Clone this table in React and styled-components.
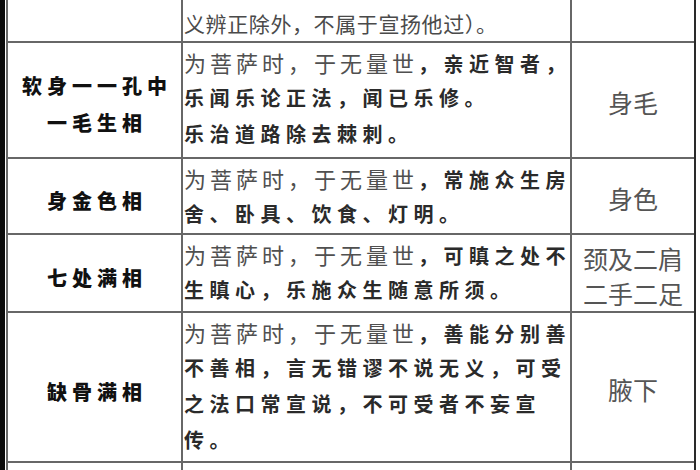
import React from 'react';
import styled, { createGlobalStyle } from 'styled-components';

const GlobalStyle = createGlobalStyle`
  html, body {
    margin: 0;
    padding: 0;
    background: #fff;
    overflow: hidden;
  }
  body {
    font-family: "Noto Sans CJK SC", "Noto Sans", sans-serif;
  }
`;

const rows = [
  {
    title: [],
    lines: [[null, '义辨正除外，不属于宣扬他过）。']],
    part: [],
    height: 43,
    top: 5,
    plain: true,
  },
  {
    title: ['软身一一孔中', '一毛生相'],
    lines: [
      ['为菩萨时，于无量世', '，亲近智者，'],
      [null, null, '乐闻乐论正法，闻已乐修。'],
      [null, null, '乐治道路除去棘刺。'],
    ],
    part: ['身毛'],
    height: 116,
  },
  {
    title: ['身金色相'],
    lines: [
      ['为菩萨时，于无量世', '，常施众生房'],
      [null, null, '舍、卧具、饮食、灯明。'],
    ],
    part: ['身色'],
    height: 76,
  },
  {
    title: ['七处满相'],
    lines: [
      ['为菩萨时，于无量世', '，可瞋之处不'],
      [null, null, '生瞋心，乐施众生随意所须。'],
    ],
    part: ['颈及二肩', '二手二足'],
    height: 78,
  },
  {
    title: ['缺骨满相'],
    lines: [
      ['为菩萨时，于无量世', '，善能分别善'],
      [null, null, '不善相，言无错谬不说无义，可受'],
      [null, null, '之法口常宣说，不可受者不妄宣'],
      [null, null, '传。'],
    ],
    part: ['腋下'],
    height: 150,
  },
  {
    title: [],
    lines: [],
    part: [],
    height: 40,
  },
];

const Frame = styled.div`
  display: flex;
  height: 470px;
  overflow: hidden;
  border-left: 5px solid #0b0b0b;
  padding-left: 1px;
  box-sizing: border-box;
`;

const Table = styled.div`
  display: flex;
  flex-direction: column;
  width: 690px;
  border-left: 2px solid #6a6a6a;
  border-right: 2px solid #2a2a2a;
  box-sizing: border-box;
  align-self: flex-start;
`;

const Row = styled.div`
  display: grid;
  grid-template-columns: 175px 389px 122px;
  height: ${(p) => p.$h}px;
  border-bottom: 2px solid #676767;
  box-sizing: border-box;
  flex-shrink: 0;
`;

const Cell = styled.div`
  border-right: 2px solid #676767;
  box-sizing: border-box;
  overflow: hidden;
  &:last-child {
    border-right: none;
  }
`;

const TitleCell = styled(Cell)`
  display: flex;
  flex-direction: column;
  justify-content: center;
  align-items: center;
  padding-top: 8px;
`;

const TitleLine = styled.div`
  font-size: 20px;
  font-weight: 900;
  color: #111;
  letter-spacing: 5px;
  padding-left: 5px;
  line-height: 37px;
  white-space: nowrap;
`;

const TextCell = styled(Cell)`
  padding-top: ${(p) => p.$top ?? 1}px;
  padding-left: 1px;
`;

const TextLine = styled.div`
  line-height: 36px;
  height: 36px;
  white-space: nowrap;
`;

const Lead = styled.span`
  font-size: 22px;
  font-weight: 400;
  color: #505050;
  letter-spacing: 4px;
`;

const Plain = styled.span`
  font-size: 21px;
  font-weight: 400;
  color: #4a4a4a;
  letter-spacing: 0.6px;
`;

const Body = styled.span`
  font-size: 20px;
  font-weight: 700;
  color: #2a2a2a;
  letter-spacing: 5.5px;
`;

const PartCell = styled(Cell)`
  display: flex;
  flex-direction: column;
  justify-content: center;
  align-items: center;
  padding-top: 5px;
`;

const PartLine = styled.div`
  font-size: 25px;
  font-weight: 400;
  color: #555;
  line-height: 35px;
  white-space: nowrap;
`;

const App = () => {
  return (
    <>
      <GlobalStyle />
      <Frame>
        <Table>
          {rows.map((row, i) => (
            <Row key={i} $h={row.height}>
              <TitleCell>
                {row.title.map((t) => (
                  <TitleLine key={t}>{t}</TitleLine>
                ))}
              </TitleCell>
              <TextCell $top={row.top}>
                {row.lines.map((l, j) => (
                  <TextLine key={j}>
                    {row.plain ? <Plain>{l[1]}</Plain> : null}
                    {!row.plain && l[0] ? <Lead>{l[0]}</Lead> : null}
                    {!row.plain && l[1] ? <Body>{l[1]}</Body> : null}
                    {!row.plain && l[2] ? <Body>{l[2]}</Body> : null}
                  </TextLine>
                ))}
              </TextCell>
              <PartCell>
                {row.part.map((p) => (
                  <PartLine key={p}>{p}</PartLine>
                ))}
              </PartCell>
            </Row>
          ))}
        </Table>
      </Frame>
    </>
  );
};

export default App;
